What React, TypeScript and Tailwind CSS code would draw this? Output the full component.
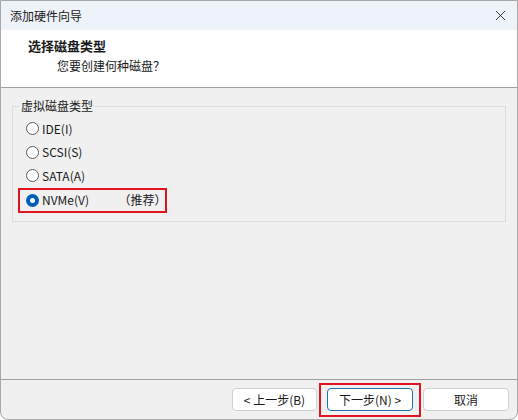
import { X } from "lucide-react";

const options = [
  { label: "IDE(I)", checked: false },
  { label: "SCSI(S)", checked: false },
  { label: "SATA(A)", checked: false },
];

function Radio({ checked }: { checked: boolean }) {
  if (checked) {
    return (
      <span className="w-[13px] h-[13px] rounded-full bg-[#005fb8] flex items-center justify-center shrink-0">
        <span className="w-[5px] h-[5px] rounded-full bg-white" />
      </span>
    );
  }
  return <span className="w-[13px] h-[13px] rounded-full border border-[#5a5a5a] bg-white shrink-0" />;
}

export default function App() {
  return (
    <div
      className="w-[518px] h-[420px] bg-[#f0f0f0] border border-[#a8a8a8] rounded-b-[8px] flex flex-col overflow-hidden text-[12px] text-[#1a1a1a]"
      style={{ fontFamily: '"Noto Sans CJK SC", "Noto Sans", sans-serif' }}
    >
      <div className="h-[29px] bg-[#eef2f9] flex items-center justify-between pl-[9px] pr-[8px] shrink-0">
        <span>添加硬件向导</span>
        <X size={17} strokeWidth={1.2} />
      </div>
      <div className="h-[58px] bg-white border-b border-[#a0a0a0] pl-[27px] pt-[7px] shrink-0">
        <div className="font-bold text-[13px] leading-[18px]">选择磁盘类型</div>
        <div className="pl-[29px] leading-[18px] mt-[2px]">您要创建何种磁盘？</div>
      </div>
      <div className="flex-1 px-[11px] pt-[10px]">
        <fieldset className="border border-[#dcdcdc] w-[494px] h-[124px] px-[5px]">
          <legend className="px-[2px] ml-[1px] leading-[16px]">虚拟磁盘类型</legend>
          <div className="flex flex-col pt-[3px]">
            {options.map((o) => (
              <div key={o.label} className="flex items-center gap-[3px] h-[23.5px] pl-[8px]">
                <Radio checked={o.checked} />
                <span>{o.label}</span>
              </div>
            ))}
            <div className="w-[149px] h-[25px] border-2 border-[#e0141e] flex items-center gap-[3px] pl-[6px]">
              <Radio checked />
              <span className="w-[76px]">NVMe(V)</span>
              <span>（推荐）</span>
            </div>
          </div>
        </fieldset>
      </div>
      <div className="h-[40px] border-t border-[#a0a0a0] flex items-center justify-end pr-[8px] gap-[2px] shrink-0">
        <button className="w-[85px] h-[23px] bg-white border border-[#d0d0d0] rounded-[4px]">
          &lt; 上一步(B)
        </button>
        <div className="border-2 border-[#e0141e] w-[102px] h-[34px] flex items-center justify-center">
          <button className="w-[86px] h-[23px] bg-white border border-[#1f6fb5] rounded-[4px]">
            下一步(N) &gt;
          </button>
        </div>
        <button className="w-[86px] h-[23px] bg-white border border-[#d0d0d0] rounded-[4px]">
          取消
        </button>
      </div>
    </div>
  );
}
